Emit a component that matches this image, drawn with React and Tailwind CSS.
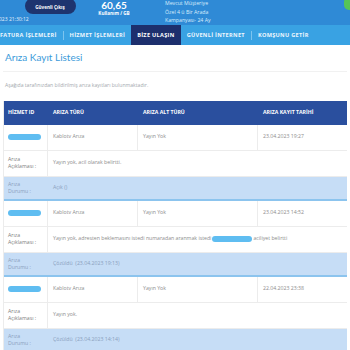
import React from 'react';

const records = [
  {
    type: 'Kablotv Arıza',
    sub: 'Yayın Yok',
    date: '23.04.2023 19:27',
    desc: 'Yayın yok, acil olarak belirtti.',
    status: 'Açık ()',
  },
  {
    type: 'Kablotv Arıza',
    sub: 'Yayın Yok',
    date: '23.04.2023 14:52',
    desc: 'Yayın yok, adresten beklemasını istedi numaradan aranmak istedi',
    descTail: 'aciliyet belirtti',
    status: 'Çözüldü  (23.04.2023 19:13)',
  },
  {
    type: 'Kablotv Arıza',
    sub: 'Yayın Yok',
    date: '22.04.2023 23:38',
    desc: 'Yayın yok.',
    status: 'Çözüldü  (23.04.2023 14:14)',
  },
];

const Blob = ({ className }) => (
  <span className={`inline-block h-[6px] rounded-full bg-[#5fbdf1] blur-[0.6px] ${className}`} />
);

const Record = ({ r }) => (
  <div className="border-b-2 border-[#8cc4ee]">
    <div className="grid grid-cols-[44px_90px_120px_90px] h-[26px] border-b border-[#ececec] text-[5.2px] text-[#8d8d8d]">
      <div className="flex items-center pl-[4px] border-r border-[#ececec]">
        <Blob className="w-[33px]" />
      </div>
      <div className="flex items-center pl-[5px] border-r border-[#ececec]">{r.type}</div>
      <div className="flex items-center pl-[5px] border-r border-[#ececec]">{r.sub}</div>
      <div className="flex items-center pl-[5px]">{r.date}</div>
    </div>
    <div className="grid grid-cols-[44px_300px] h-[26px] border-b border-[#ececec] text-[5.2px] text-[#8d8d8d]">
      <div className="flex items-center pl-[4px] border-r border-[#ececec] leading-[7px] text-[#7d7d7d]">
        Arıza<br />Açıklaması :
      </div>
      <div className="flex items-center pl-[5px] whitespace-nowrap">
        {r.desc}
        {r.descTail && (
          <>
            <Blob className="w-[40px] ml-[1px] mr-[1px]" />
            {r.descTail}
          </>
        )}
      </div>
    </div>
    <div className="grid grid-cols-[44px_300px] h-[22px] bg-[#c6ddf6] text-[5.2px] text-[#8aa0bd]">
      <div className="flex items-center pl-[4px] leading-[7px]">
        Arıza<br />Durumu :
      </div>
      <div className="flex items-center pl-[5px] whitespace-pre">{r.status}</div>
    </div>
  </div>
);

const NavItem = ({ children, active, sep }) => (
  <div className="flex items-center h-full">
    <div
      className={`flex items-center h-full px-[6px] font-bold text-[5.6px] tracking-[0.3px] ${
        active ? 'bg-[#1d2f6d] text-white' : 'text-[#eef6fd]'
      }`}
    >
      {children}
    </div>
    {sep && <div className="w-px h-[9px] bg-[#7cc4ef]" />}
  </div>
);

export default function App() {
  return (
    <div className="w-[350px] h-[350px] overflow-hidden bg-white font-['Open_Sans','Lato',sans-serif]">
      <header className="h-[25px] bg-[#2f8ad6] overflow-hidden relative text-white">
        <div className="flex items-start -mt-[3px]">
          <div className="flex flex-col w-[95px]">
            <div className="flex justify-center pl-[5px]">
              <div className="mt-[1px] bg-[#1e346f] rounded-full w-[51px] h-[16px] flex items-center justify-center pt-[3px] text-[4.6px] font-bold">
                Güvenli Çıkış
              </div>
            </div>
            <div className="text-[5px] mt-[2px] -ml-[1px] text-[#e5f1fb]">023 21:30:12</div>
          </div>
          <div className="flex flex-col items-center w-[38px] mt-[3px]">
            <div className="text-[10px] leading-[8px] pt-[1px] font-bold font-['Lato',sans-serif]">60,65</div>
            <div className="text-[4.6px] font-bold mt-[1px]">Kullanım / GB</div>
          </div>
          <div className="flex flex-col ml-[32px] mt-[2px] text-[5.2px] leading-[8.5px] text-[#d8ecfb]">
            <span>Mevcut Müşteriye</span>
            <span>Özel 4 ü Bir Arada</span>
            <span>Kampanyası- 24 Ay</span>
          </div>
        </div>
        <div className="absolute right-[-4px] top-[-3px] w-[10px] h-[13px] rounded-full bg-[#56c456]" />
      </header>
      <nav className="h-[20px] bg-[#39a2e3] flex items-center -ml-[6px]">
        <NavItem sep>FATURA İŞLEMLERİ</NavItem>
        <NavItem>HİZMET İŞLEMLERİ</NavItem>
        <NavItem active>BİZE ULAŞIN</NavItem>
        <NavItem sep>GÜVENLİ İNTERNET</NavItem>
        <NavItem>KOMŞUNU GETİR</NavItem>
      </nav>
      <main className="px-[3px]">
        <h1 className="pl-[2px] pt-[6px] text-[10px] leading-[13px] text-[#3c9bda] font-['Lato',sans-serif]">
          Arıza Kayıt Listesi
        </h1>
        <div className="h-px bg-[#f1f1f1] mt-[7px]" />
        <p className="text-[5.1px] text-[#a3a9ae] mt-[10px] pl-[2px]">
          Aşağıda tarafınızdan bildirilmiş arıza kayıtları bulunmaktadır.
        </p>
        <div className="mt-[11px] w-[344px] border-l border-[#ececec]">
          <div className="grid grid-cols-[44px_90px_120px_90px] h-[24px] bg-[#2a4f9e] text-white text-[5.2px] font-bold">
            <div className="flex items-center pl-[4px]">HİZMET ID</div>
            <div className="flex items-center pl-[5px]">ARIZA TÜRÜ</div>
            <div className="flex items-center pl-[5px]">ARIZA ALT TÜRÜ</div>
            <div className="flex items-center pl-[5px]">ARIZA KAYIT TARİHİ</div>
          </div>
          {records.map((r, i) => (
            <Record key={i} r={r} />
          ))}
        </div>
      </main>
    </div>
  );
}
